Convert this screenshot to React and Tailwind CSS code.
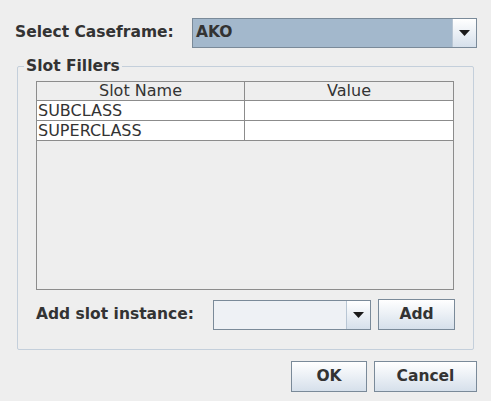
import React from "react";

const font = { fontFamily: '"DejaVu Sans", sans-serif' };

function Arrow() {
  return (
    <svg width="11" height="6" viewBox="0 0 11 6">
      <polygon points="0,0 11,0 5.5,6" fill="#1a1a1a" />
    </svg>
  );
}

function Btn({ children, className }) {
  return (
    <div
      className={
        "flex items-center justify-center border border-[#7a8a99] bg-gradient-to-b from-[#ffffff] to-[#d6e0eb] text-[15.5px] font-bold text-[#333333] " +
        className
      }
    >
      {children}
    </div>
  );
}

export default function App() {
  return (
    <div
      className="w-[491px] h-[401px] bg-[#eeeeee] relative overflow-hidden text-[#333333]"
      style={font}
    >
      <div className="flex flex-col pt-[18px]">
        {/* Row 1 */}
        <div className="flex items-center h-[30px] pl-[15px]">
          <div className="w-[177px] text-[15.5px] font-bold">Select Caseframe:</div>
          <div className="flex w-[285px] h-[30px] border border-[#7a8a99] bg-[#a3b8cc]">
            <div className="flex-1 flex items-center pl-[3px] text-[15.5px] font-bold text-[#333333]">AKO</div>
            <div className="w-[24px] flex items-center justify-center border-l border-[#b8c6d4] bg-gradient-to-b from-[#ffffff] to-[#d6e0eb]">
              <Arrow />
            </div>
          </div>
        </div>

        {/* Fieldset */}
        <div className="relative ml-[17px] mt-[18px] w-[457px] h-[284px] border border-[#c4cfdb] rounded-[2px]">
          <div className="absolute left-[6px] top-[-11px] px-[2px] bg-[#eeeeee] text-[15.5px] font-bold leading-[20px]">
            Slot Fillers
          </div>
          <div className="flex flex-col pl-[18px] pt-[14px]">
            {/* Table */}
            <div className="w-[418px] h-[209px] border border-[#8c8c8c] bg-[#eeeeee] flex flex-col">
              <div className="flex h-[19px] border-b border-[#8c8c8c] text-[16px] leading-[18px]">
                <div className="w-[208px] border-r border-[#8c8c8c] text-center">Slot Name</div>
                <div className="flex-1 text-center">Value</div>
              </div>
              {["SUBCLASS", "SUPERCLASS"].map((r) => (
                <div key={r} className="flex h-[20px] bg-white border-b border-[#8c8c8c] text-[16px] leading-[19px]">
                  <div className="w-[208px] border-r border-[#8c8c8c] pl-[1px]">{r}</div>
                  <div className="flex-1" />
                </div>
              ))}
            </div>
            {/* Add row */}
            <div className="flex items-center mt-[9px] h-[31px]">
              <div className="w-[177px] text-[15.5px] font-bold">Add slot instance:</div>
              <div className="flex w-[158px] h-[30px] border border-[#7a8a99] bg-[#eef1f5]">
                <div className="flex-1" />
                <div className="w-[24px] flex items-center justify-center border-l border-[#b8c6d4] bg-gradient-to-b from-[#ffffff] to-[#d6e0eb]">
                  <Arrow />
                </div>
              </div>
              <Btn className="ml-[7px] w-[77px] h-[31px]">Add</Btn>
            </div>
          </div>
        </div>

        {/* Bottom buttons */}
        <div className="flex justify-end gap-[7px] pr-[14px] mt-[11px]">
          <Btn className="w-[76px] h-[31px]">OK</Btn>
          <Btn className="w-[103px] h-[31px]">Cancel</Btn>
        </div>
      </div>
    </div>
  );
}
